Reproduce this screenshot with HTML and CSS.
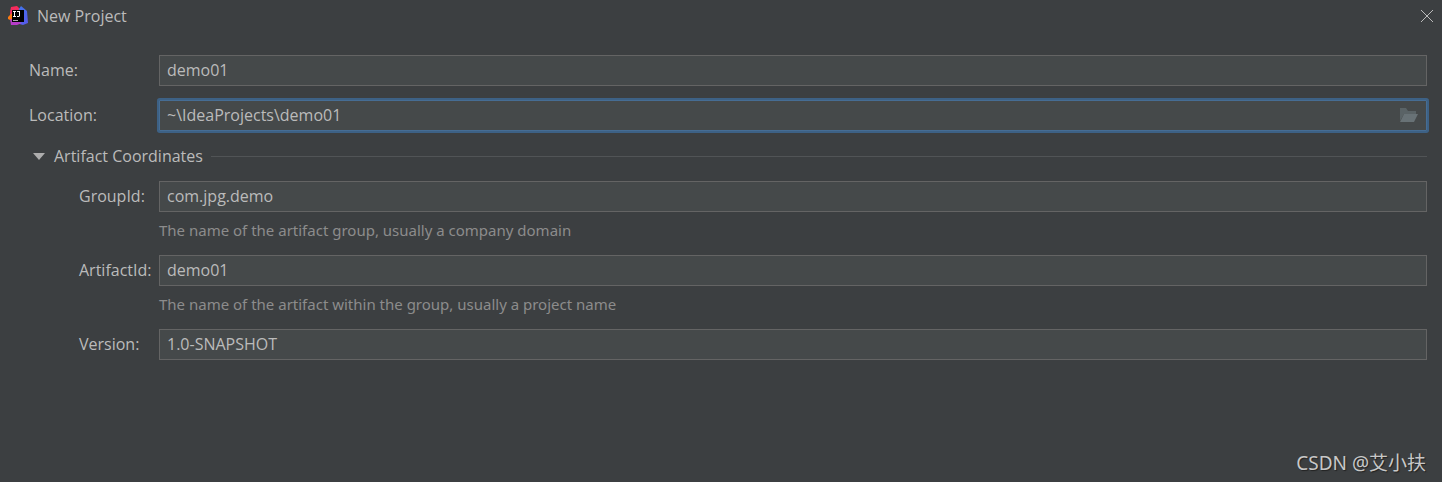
FILE: index.html
```
<!DOCTYPE html>
<html lang="en">
<head>
  <meta charset="utf-8">
  <title>New Project</title>
  <link rel="stylesheet" href="styles.css">
</head>
<body>

  <header class="titlebar">
    <svg class="logo" viewBox="0 0 20 20" aria-hidden="true">
      <defs>
        <linearGradient id="blue" x1="0" y1="0" x2="1" y2="1">
          <stop offset="0" stop-color="#3b7cf0" />
          <stop offset="1" stop-color="#5a56e8" />
        </linearGradient>
        <linearGradient id="pink" x1="0" y1="0" x2="0" y2="1">
          <stop offset="0" stop-color="#fe2857" />
          <stop offset="1" stop-color="#c8397c" />
        </linearGradient>
      </defs>
      <path fill="url(#pink)" d="M3 1l6-1 5 5-6 7-6 2V6z" />
      <path fill="#f97a12" d="M0 11l4-4v8l-4-2z" />
      <path fill="url(#blue)" d="M13 0l6 5 1 12-5 2-7-2 3-14z" />
      <path fill="#b63cc8" d="M2 13l4 1 8 3-5 2-6 0z" />
      <path fill="#000" d="M4 4h12v12H4z" />
      <path fill="#fff" d="M5 5h3v1H7v4h1v1H5v-1h1V6H5zM9 5h3v5l-1 1H9v-1h2V6H9z" />
      <path fill="#aaa" d="M5 14h5v1H5z" />
    </svg>
    <h1>New Project</h1>
    <button type="button" class="close" aria-label="Close">
      <svg viewBox="0 0 12 12"><path d="M0 0l12 12M12 0L0 12" /></svg>
    </button>
  </header>

  <form class="project">
    <div class="row">
      <label for="name">Name:</label>
      <input type="text" id="name" value="demo01">
    </div>

    <div class="row">
      <label for="location">Location:</label>
      <div class="path active">
        <input type="text" id="location" value="~\IdeaProjects\demo01">
        <button type="button" class="browse" aria-label="Browse">
          <svg viewBox="0 0 20 15">
            <path fill="#5a6366" d="M1 0h6l2 3h8v3H5L1 13z" />
            <path fill="#687276" d="M5 6h14l-4 8H1z" />
          </svg>
        </button>
      </div>
    </div>

    <div class="section">
      <button type="button" class="toggle" aria-expanded="true">
        <svg viewBox="0 0 12 7"><path d="M0 0h12L6 7z" /></svg>
        Artifact Coordinates
      </button>
      <span class="line"></span>
    </div>

    <div class="coordinates">
      <div class="row">
        <label for="group">GroupId:</label>
        <input type="text" id="group" value="com.jpg.demo">
        <p class="hint">The name of the artifact group, usually a company domain</p>
      </div>
      <div class="row">
        <label for="artifact">ArtifactId:</label>
        <input type="text" id="artifact" value="demo01">
        <p class="hint">The name of the artifact within the group, usually a project name</p>
      </div>
      <div class="row">
        <label for="version">Version:</label>
        <input type="text" id="version" value="1.0-SNAPSHOT">
      </div>
    </div>
  </form>

  <footer class="credit">CSDN @艾小扶</footer>

</body>
</html>
```

FILE: styles.css
```
* {
  box-sizing: border-box;
}

body {
  display: flex;
  flex-direction: column;
  min-height: 100vh;
  margin: 0;
  background: #3c3f41;
  color: #bbbbbb;
  font: 16px/22px "Open Sans", "Noto Sans CJK SC", sans-serif;
}

input,
button {
  margin: 0;
  padding: 0;
  border: 0;
  background: none;
  color: inherit;
  font: inherit;
}

svg {
  display: block;
}

/* title bar */
.titlebar {
  display: flex;
  align-items: center;
  height: 32px;
  padding: 0 8px;
}
.logo {
  width: 20px;
  height: 20px;
}
.titlebar h1 {
  flex: 1;
  margin: 0 0 0 9px;
  font-size: 16px;
  font-weight: normal;
}
.close svg {
  width: 14px;
  height: 14px;
  padding: 1px;
  overflow: visible;
  stroke: #bbbbbb;
}

/* form */
.project {
  padding: 23px 15px 0 29px;
}
.row {
  display: grid;
  grid-template-columns: 130px 1fr;
  align-items: center;
  margin-bottom: 14px;
}
.row input {
  width: 100%;
  min-width: 0;
  height: 31px;
  padding: 0 7px 1px;
  border: 1px solid #646464;
  background: #45494a;
  outline: none;
}
.row label {
  padding-bottom: 1px;
}
.path {
  display: flex;
  align-items: center;
  height: 31px;
  background: #45494a;
}
.path.active {
  border-radius: 1px;
  box-shadow: 0 0 0 2px #3d6185;
  border: 1px solid #466d94;
}
.path.active input {
  flex: 1;
  height: 29px;
  border: 0;
}
.browse svg {
  width: 20px;
  height: 15px;
  margin-right: 7px;
}

/* collapsible section */
.section {
  display: flex;
  align-items: center;
  margin-bottom: 14px;
}
.toggle {
  display: flex;
  align-items: center;
  gap: 9px;
  padding-left: 4px;
}
.toggle svg {
  width: 12px;
  height: 7px;
  fill: #adadad;
}
.line {
  flex: 1;
  height: 1px;
  margin-left: 8px;
  background: #515456;
}
.coordinates {
  padding-left: 50px;
}
.coordinates .row {
  grid-template-columns: 80px 1fr;
}
.hint {
  grid-column: 2;
  margin: 7px 0 0;
  color: #8c8c8c;
  font-family: "Noto Sans", sans-serif;
  font-size: 15px;
}

.credit {
  margin-top: auto;
  padding: 0 16px 6px;
  color: #c8c8c8;
  font-family: "Noto Sans", "Noto Sans CJK SC", sans-serif;
  font-size: 19px;
  line-height: 26px;
  text-align: right;
  text-shadow: 1px 1px 1px #222222;
}
```
